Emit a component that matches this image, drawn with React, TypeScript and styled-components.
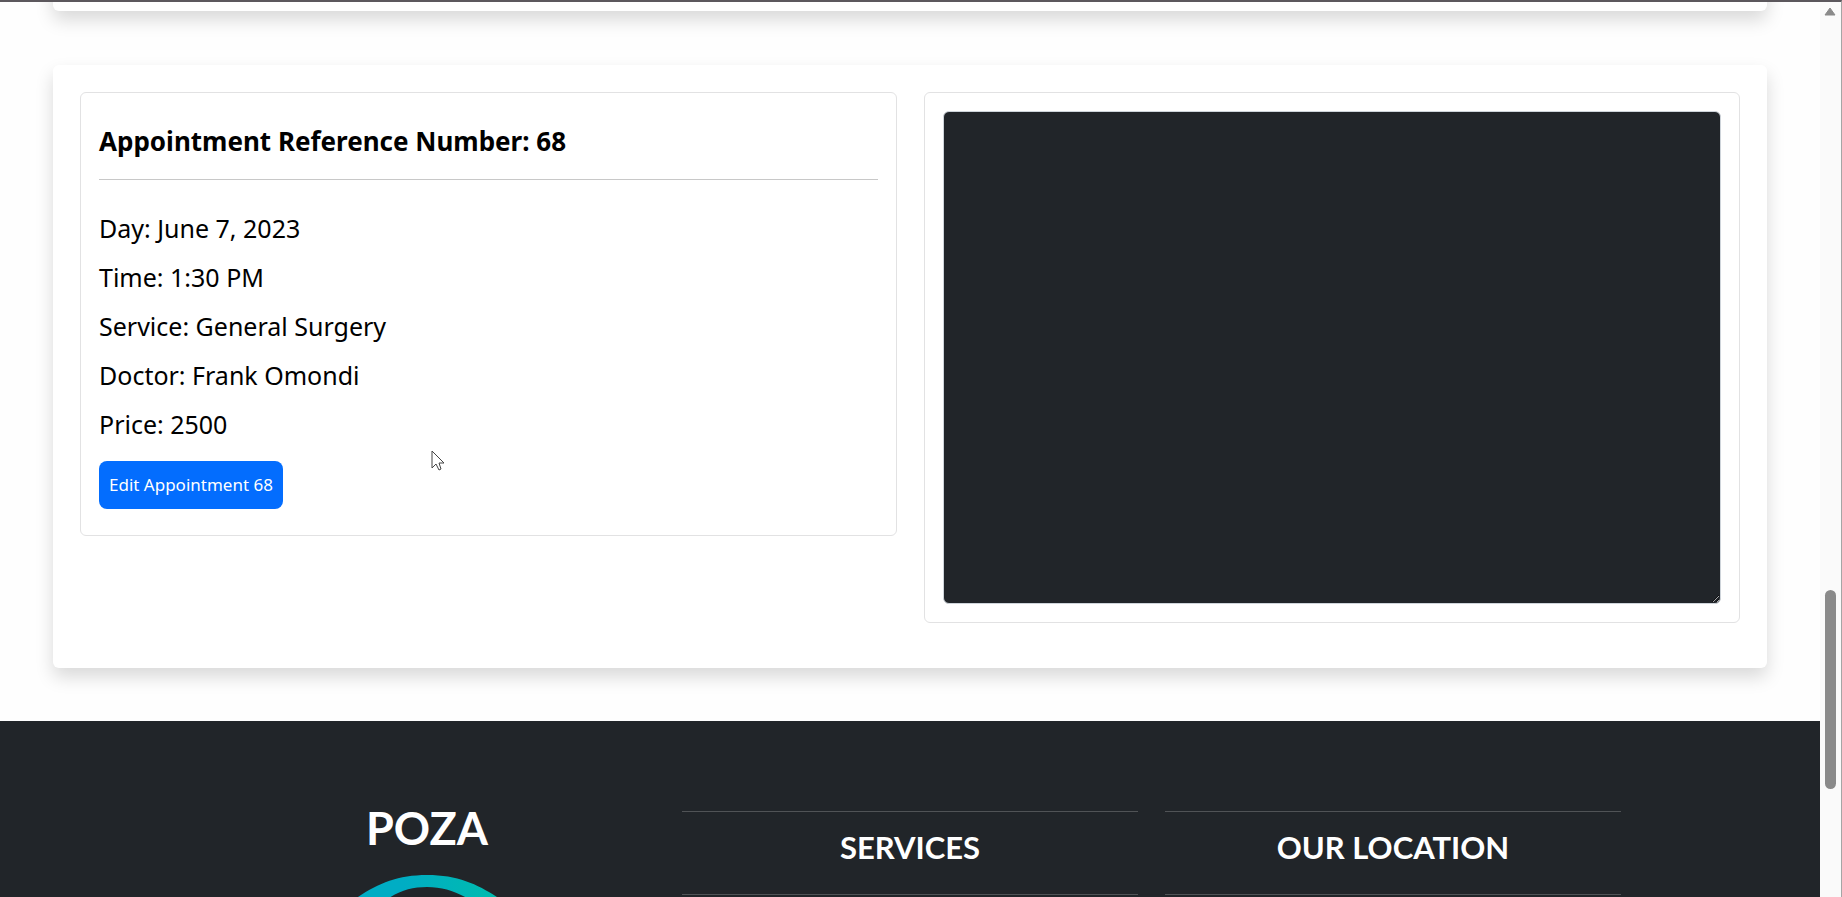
import React from "react";
import styled, { createGlobalStyle } from "styled-components";

const GlobalStyle = createGlobalStyle`
  *, *::before, *::after { box-sizing: border-box; }
  body { margin: 0; background: #fefefe; color: #000; font-family: "Noto Sans", "Open Sans", sans-serif; }
`;

const Viewport = styled.div`
  display: flex;
  height: 100vh;
  overflow: hidden;
  border-top: 2px solid #5c585d;
  border-right: 1px solid #a5a5a5;
`;

const Page = styled.div`
  flex: 1;
  min-width: 0;
  overflow: hidden;
`;

const Main = styled.main`
  display: flex;
  flex-direction: column;
  gap: 54px;
  margin-top: -80px;
  padding: 0 53px 53px;
`;

const Panel = styled.section`
  display: grid;
  grid-template-columns: 1fr 1fr;
  align-items: start;
  gap: 27px;
  padding: 27px 27px 45px;
  border-radius: 6px;
  background: #fff;
  box-shadow: 0 9px 18px rgba(0, 0, 0, 0.15);
`;

const PreviousPanel = styled(Panel)`
  min-height: 89px;
`;

const Card = styled.article`
  padding: 18px;
  border: 1px solid #e2e2e3;
  border-radius: 6px;
  background: #fff;
`;

const CardTitle = styled.h2`
  margin: 0;
  padding: 10px 0 18px;
  border-bottom: 1px solid #c8c8c8;
  font-size: 26px;
  line-height: 40px;
  font-weight: 700;
`;

const Details = styled.ul`
  margin: 24px 0 12px;
  padding: 0;
  list-style: none;
  font-size: 25px;
  line-height: 49px;
`;

const EditButton = styled.button`
  display: block;
  height: 48px;
  margin-bottom: 8px;
  padding: 0 10px;
  border: 0;
  border-radius: 8px;
  background: #036dfe;
  color: #fff;
  font: 400 17px/28px "Noto Sans", "Open Sans", sans-serif;
`;

const Notes = styled.textarea`
  display: block;
  width: 100%;
  height: 493px;
  padding: 8px 14px;
  border: 1px solid #ced4da;
  border-radius: 6px;
  background: #212529;
  color: #fff;
  font: inherit;
  resize: vertical;
`;

const Footer = styled.footer`
  display: grid;
  grid-template-columns: repeat(3, minmax(0, 1fr));
  align-items: start;
  gap: 27px;
  padding: 90px 199px;
  background: #212529;
  color: #fff;
  font-family: Lato, sans-serif;
  text-align: center;
`;

const Brand = styled.div`
  display: flex;
  flex-direction: column;
  align-items: center;
`;

const BrandName = styled.h2`
  margin: 0 0 30px;
  font-size: 45px;
  line-height: 34px;
  font-weight: 700;
`;

const FooterTitle = styled.h3`
  margin: 0;
  padding: 18px 0 29px;
  border: solid #505356;
  border-width: 1px 0;
  font-size: 31px;
  line-height: 35px;
  font-weight: 700;
`;

const Scrollbar = styled.div`
  display: flex;
  flex-direction: column;
  align-items: center;
  width: 21px;
  padding-right: 1px;
  background: #fafafa;
`;

const Thumb = styled.div`
  width: 11px;
  height: 199px;
  margin-top: 573px;
  border-radius: 6px;
  background: #8a8a8a;
`;

const Pointer = styled.svg`
  position: absolute;
  left: 431px;
  top: 450px;
`;

const details = [
  "Day: June 7, 2023",
  "Time: 1:30 PM",
  "Service: General Surgery",
  "Doctor: Frank Omondi",
  "Price: 2500",
];

export default function App() {
  return (
    <Viewport>
      <GlobalStyle />
      <Page>
        <Main>
          <PreviousPanel />
          <Panel>
            <Card>
              <CardTitle>Appointment Reference Number: 68</CardTitle>
              <Details>
                {details.map((line) => (
                  <li key={line}>{line}</li>
                ))}
              </Details>
              <EditButton type="button">Edit Appointment 68</EditButton>
            </Card>
            <Card>
              <Notes aria-label="Appointment notes" />
            </Card>
          </Panel>
        </Main>
        <Footer>
          <Brand>
            <BrandName>POZA</BrandName>
            <svg width="240" height="240" viewBox="0 0 240 240" fill="none" aria-hidden="true">
              <defs>
                <linearGradient id="ring" x1="0" y1="0" x2="240" y2="0" gradientUnits="userSpaceOnUse">
                  <stop offset="0.4" stopColor="#00adc4" />
                  <stop offset="0.8" stopColor="#00bcae" />
                </linearGradient>
              </defs>
              <path
                fill="url(#ring)"
                fillRule="evenodd"
                d="M48 24C70 9 90 0 120 0C152 0 172 10 193 24C225 44 240 80 240 120A120 120 0 0 1 0 120C0 80 18 44 48 24ZM82 23C94 15 106 12 120 12C135 12 147 16 160 23C200 40 226 78 226 120A106 106 0 0 1 14 120C14 78 44 40 82 23Z"
              />
            </svg>
          </Brand>
          <FooterTitle>SERVICES</FooterTitle>
          <FooterTitle>OUR LOCATION</FooterTitle>
        </Footer>
      </Page>
      <Scrollbar aria-hidden="true">
        <svg width="12" height="15" viewBox="0 0 12 15">
          <path d="M6 6 L11 13 H1 Z" fill="#8a8a8a" stroke="#8a8a8a" strokeLinejoin="round" />
        </svg>
        <Thumb />
      </Scrollbar>
      <Pointer width="14" height="22" viewBox="0 0 14 22" aria-hidden="true">
        <path d="M1 1 V18 L5 14 L8 20 L10 19 L8 13 H13 Z" fill="#fff" stroke="#444" />
      </Pointer>
    </Viewport>
  );
}
